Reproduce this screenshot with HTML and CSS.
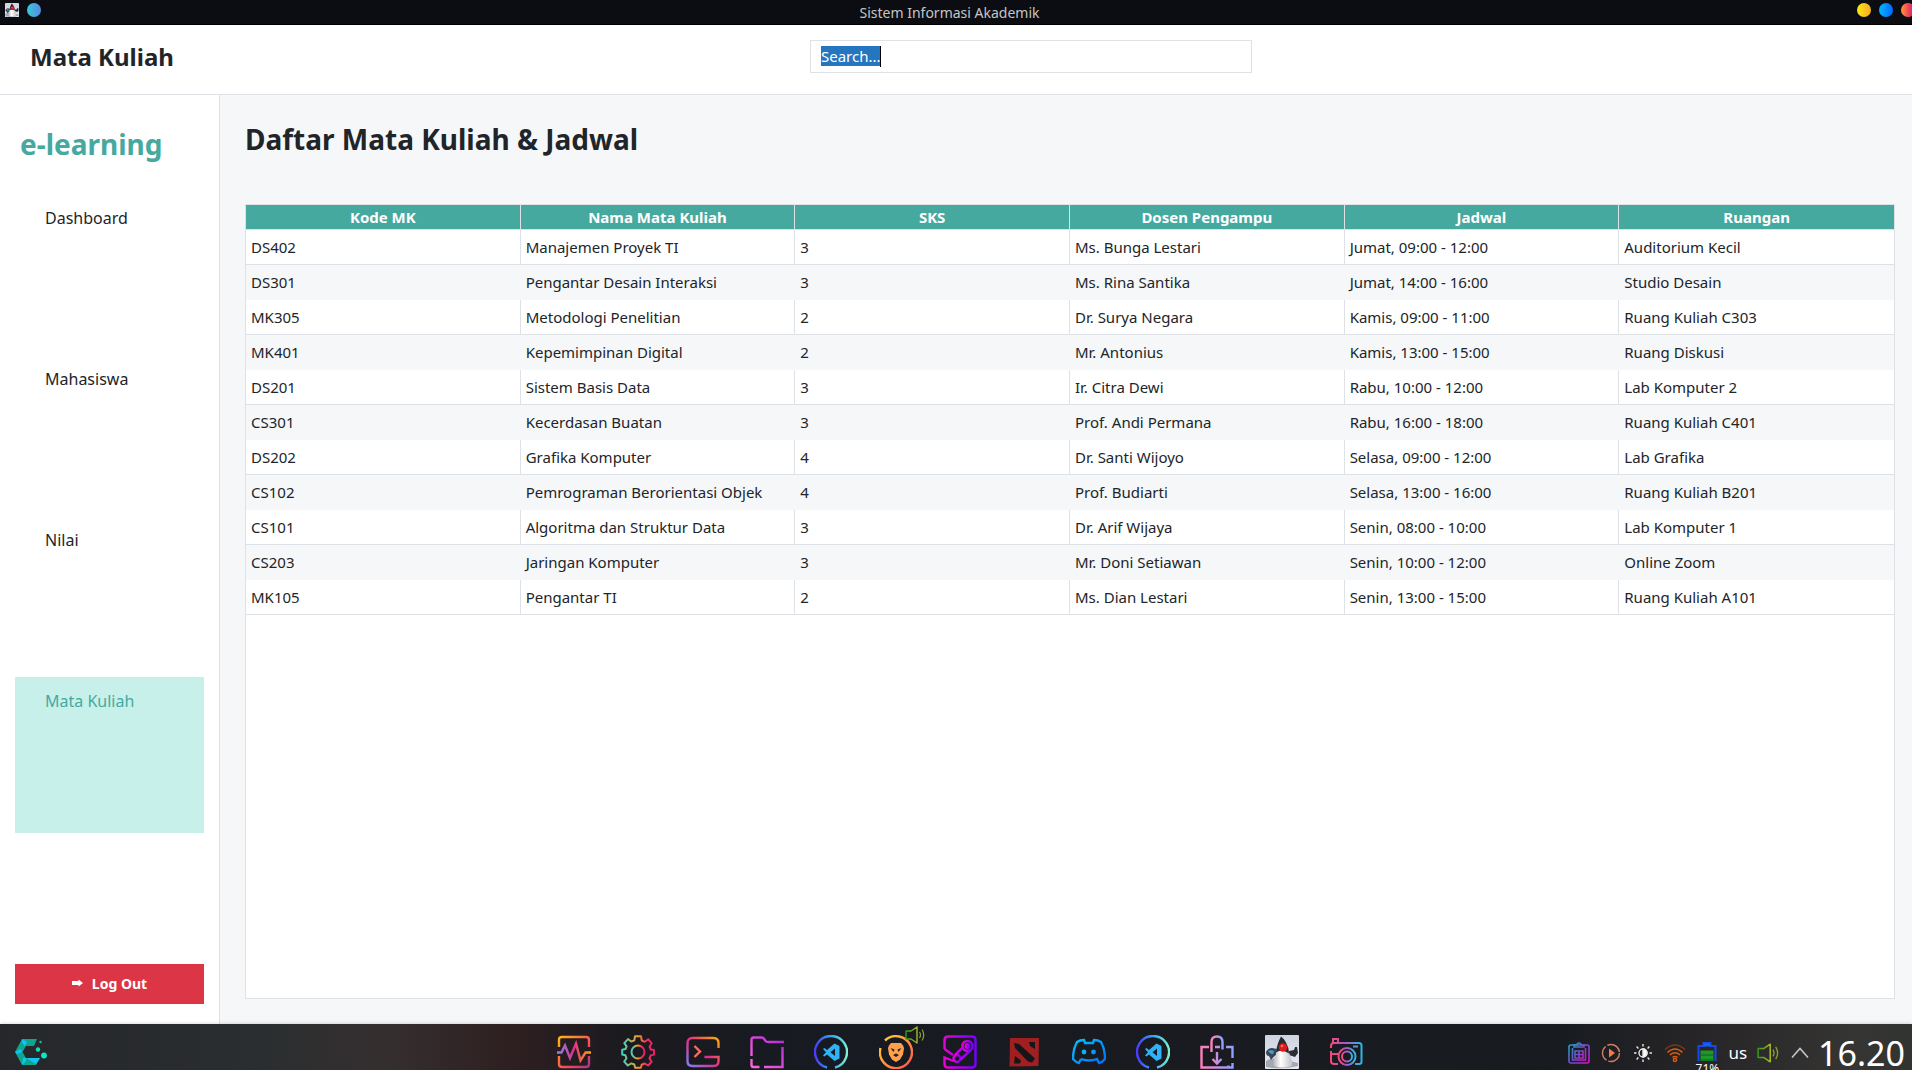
FILE: index.html
```html
<!DOCTYPE html>
<html lang="id">
<head>
<meta charset="utf-8">
<title>Sistem Informasi Akademik</title>
<link rel="stylesheet" href="styles.css">
</head>
<body>
<svg width="0" height="0" class="defs" aria-hidden="true">
  <defs>
    <linearGradient id="warm" x1="0" y1="0" x2="1" y2="1"><stop offset="0" stop-color="#fdb717"/><stop offset=".5" stop-color="#ff5a4d"/><stop offset="1" stop-color="#b0308c"/></linearGradient>
    <linearGradient id="pulse" x1="0" y1="0" x2="1" y2="0"><stop offset="0" stop-color="#7f8cf0"/><stop offset=".5" stop-color="#e0308a"/><stop offset="1" stop-color="#ffa800"/></linearGradient>
    <linearGradient id="gear" x1="0" y1="0" x2="1" y2="0"><stop offset="0" stop-color="#3fd0c8"/><stop offset=".5" stop-color="#f59a20"/><stop offset=".75" stop-color="#f8305c"/><stop offset="1" stop-color="#e0206c"/></linearGradient>
    <linearGradient id="term" x1="0" y1="1" x2="1" y2="0"><stop offset="0" stop-color="#8080ee"/><stop offset=".5" stop-color="#e02c88"/><stop offset="1" stop-color="#ffac00"/></linearGradient>
    <linearGradient id="folder" x1="0" y1="1" x2="1" y2="0"><stop offset="0" stop-color="#ff66d8"/><stop offset="1" stop-color="#ad2ad8"/></linearGradient>
    <linearGradient id="code" x1="0" y1="0" x2="1" y2="0"><stop offset="0" stop-color="#4a3cf8"/><stop offset=".5" stop-color="#2fa6f8"/><stop offset="1" stop-color="#7cf0d0"/></linearGradient>
    <linearGradient id="brave" x1="0" y1="0" x2="1" y2="1"><stop offset="0" stop-color="#ffd830"/><stop offset="1" stop-color="#ff5050"/></linearGradient>
    <linearGradient id="steam" x1="0" y1="0" x2="1" y2="0"><stop offset="0" stop-color="#e800d8"/><stop offset="1" stop-color="#7800ff"/></linearGradient>
    <linearGradient id="discord" x1="0" y1="0" x2="1" y2="1"><stop offset="0" stop-color="#08c0f8"/><stop offset="1" stop-color="#0070ff"/></linearGradient>
    <linearGradient id="bag" x1="0" y1="0" x2="1" y2="0"><stop offset="0" stop-color="#ff80b8"/><stop offset="1" stop-color="#90a0ff"/></linearGradient>
    <linearGradient id="camera" x1="0" y1="0" x2="1" y2="0"><stop offset="0" stop-color="#f04c78"/><stop offset=".4" stop-color="#b850c0"/><stop offset="1" stop-color="#28b8e8"/></linearGradient>
    <linearGradient id="clip" x1="0" y1="0" x2="1" y2="1"><stop offset="0" stop-color="#20a0c8"/><stop offset=".5" stop-color="#7050c8"/><stop offset="1" stop-color="#d810c8"/></linearGradient>
    <linearGradient id="sound" x1="0" y1="0" x2="1" y2="0"><stop offset="0" stop-color="#2f9a1c"/><stop offset="1" stop-color="#a8b820"/></linearGradient>
    <linearGradient id="duke" x1="0" y1="0" x2="0" y2="1"><stop offset="0" stop-color="#ced3e0"/><stop offset="1" stop-color="#e8eaf2"/></linearGradient>
    <linearGradient id="belly" x1="0" y1="0" x2="1" y2="0"><stop offset="0" stop-color="#b4b4b8"/><stop offset=".4" stop-color="#fff"/><stop offset="1" stop-color="#c0c0c6"/></linearGradient>
    <symbol id="i-duke" viewBox="0 0 34 34">
      <rect width="34" height="34" rx="1" fill="url(#duke)"/>
      <path d="M1 26q8-4 16-2t16 4v3q-16 4-32 1z" fill="#a4a7b4"/>
      <path d="M1 17q2-4 6-4l5 1-1 6q-3 2-5 5l-2-4q-3 0-3-4z" fill="#3a4652"/>
      <path d="M3 16q3-1.500 6 0l-1 3q-3 0-5-3z" fill="#3f9fd8"/>
      <path d="M24 16l5-1 1-3h2l1 6-3 4-6-2z" fill="#2c2e36"/>
      <path d="M12 13q0 6-2 9-3 6-1 9 8 3 18 0 1-4-1-8-2-5-3-9z" fill="url(#belly)"/>
      <path d="M16 1.500q3 2 5 6 3 5 3 11-5-3-7-3-3 0-6 2 1-9 5-16z" fill="#2b2c32"/>
      <circle cx="18" cy="12.500" r="4.200" fill="#e01a1c"/><circle cx="17" cy="11" r="1.300" fill="#ff7468"/>
    </symbol>
    <symbol id="i-code" viewBox="0 0 34 34">
      <path d="M13 32.500A16 16 0 1 1 21 32.500" fill="none" stroke="url(#code)" stroke-width="2.400"/>
      <path d="M20.500 8.500l5 2.500v12.500l-5 2.500-7.500-6.500-2.500 2-1.500-1 3-3.300-3-3.300 1.500-1 2.500 2z" fill="#2fb2f6"/>
      <path d="M21 13.500v7.500l-4.500-3.700z" fill="#171a20"/>
    </symbol>
    <symbol id="i-sound" viewBox="0 0 20 18">
      <path d="M1 5h5l6-4v16l-6-4H1z" fill="none" stroke="url(#sound)" stroke-width="1.400" stroke-linejoin="round"/>
      <path d="M14.500 6q2 3 0 6M17 3.500q3.500 5.500 0 11" fill="none" stroke="#88a828" stroke-width="1.200"/>
    </symbol>
  </defs>
</svg>

<div class="titlebar">
  <div class="titlebar-side">
    <svg class="mini-icon" viewBox="0 0 34 34"><use href="#i-duke"/></svg>
    <button class="dot dot-pin" aria-label="Sematkan"></button>
  </div>
  <span class="titlebar-text">Sistem Informasi Akademik</span>
  <div class="titlebar-side titlebar-controls">
    <button class="dot dot-min" aria-label="Minimalkan"></button>
    <button class="dot dot-max" aria-label="Maksimalkan"></button>
    <button class="dot dot-close" aria-label="Tutup"></button>
  </div>
</div>

<header class="header">
  <div class="page-name">Mata Kuliah</div>
  <div class="search-area">
    <div class="search-box">
      <input class="search" id="search" type="text" value="Search..." aria-label="Search">
      <span class="caret"></span>
    </div>
  </div>
</header>

<div class="workspace">
  <aside class="sidebar">
    <div class="brand">e-learning</div>
    <nav class="nav">
      <a class="nav-item" href="#dashboard">Dashboard</a>
      <a class="nav-item" href="#mahasiswa">Mahasiswa</a>
      <a class="nav-item" href="#nilai">Nilai</a>
      <a class="nav-item nav-item-active" href="#mata-kuliah">Mata Kuliah</a>
    </nav>
    <button class="logout"><svg width="11" height="8" viewBox="0 0 11 8" aria-hidden="true"><path d="M0 2h6.500V0.500L11 4 6.500 7.500V6H0z" fill="#fff"/></svg>Log Out</button>
  </aside>

  <main class="main">
    <h1 class="heading">Daftar Mata Kuliah &amp; Jadwal</h1>
    <div class="table-pane">
      <table class="courses">
        <thead>
          <tr><th>Kode MK</th><th>Nama Mata Kuliah</th><th>SKS</th><th>Dosen Pengampu</th><th>Jadwal</th><th>Ruangan</th></tr>
        </thead>
        <tbody>
          <tr><td>DS402</td><td>Manajemen Proyek TI</td><td>3</td><td>Ms. Bunga Lestari</td><td>Jumat, 09:00 - 12:00</td><td>Auditorium Kecil</td></tr>
          <tr><td>DS301</td><td>Pengantar Desain Interaksi</td><td>3</td><td>Ms. Rina Santika</td><td>Jumat, 14:00 - 16:00</td><td>Studio Desain</td></tr>
          <tr><td>MK305</td><td>Metodologi Penelitian</td><td>2</td><td>Dr. Surya Negara</td><td>Kamis, 09:00 - 11:00</td><td>Ruang Kuliah C303</td></tr>
          <tr><td>MK401</td><td>Kepemimpinan Digital</td><td>2</td><td>Mr. Antonius</td><td>Kamis, 13:00 - 15:00</td><td>Ruang Diskusi</td></tr>
          <tr><td>DS201</td><td>Sistem Basis Data</td><td>3</td><td>Ir. Citra Dewi</td><td>Rabu, 10:00 - 12:00</td><td>Lab Komputer 2</td></tr>
          <tr><td>CS301</td><td>Kecerdasan Buatan</td><td>3</td><td>Prof. Andi Permana</td><td>Rabu, 16:00 - 18:00</td><td>Ruang Kuliah C401</td></tr>
          <tr><td>DS202</td><td>Grafika Komputer</td><td>4</td><td>Dr. Santi Wijoyo</td><td>Selasa, 09:00 - 12:00</td><td>Lab Grafika</td></tr>
          <tr><td>CS102</td><td>Pemrograman Berorientasi Objek</td><td>4</td><td>Prof. Budiarti</td><td>Selasa, 13:00 - 16:00</td><td>Ruang Kuliah B201</td></tr>
          <tr><td>CS101</td><td>Algoritma dan Struktur Data</td><td>3</td><td>Dr. Arif Wijaya</td><td>Senin, 08:00 - 10:00</td><td>Lab Komputer 1</td></tr>
          <tr><td>CS203</td><td>Jaringan Komputer</td><td>3</td><td>Mr. Doni Setiawan</td><td>Senin, 10:00 - 12:00</td><td>Online Zoom</td></tr>
          <tr><td>MK105</td><td>Pengantar TI</td><td>2</td><td>Ms. Dian Lestari</td><td>Senin, 13:00 - 15:00</td><td>Ruang Kuliah A101</td></tr>
        </tbody>
      </table>
    </div>
  </main>
</div>

<footer class="taskbar">
  <div class="taskbar-start">
    <button class="launcher" aria-label="Menu">
      <svg width="32" height="28" viewBox="0 0 32 28">
        <path d="M7 1h15l-3 7h-8l-3.500 6L11 20h14l-4 7H7L0 14z" fill="#0fa58c"/>
        <path d="M7 1l5 3-2 4-3-3zM0 14l6-3 1 3-5 2zM11 20h14l-4 6z" fill="#10c4f8"/>
        <path d="M7 27l1-7 3 0 0 3z" fill="#10c4f8"/>
        <circle cx="25.500" cy="4" r="1.200" fill="#0bc7a8"/><circle cx="23" cy="11.500" r="2.200" fill="#08e0c0"/><circle cx="29" cy="17.500" r="2.900" fill="#08e8c4"/>
      </svg>
    </button>
  </div>
  <div class="apps">
    <button class="app" aria-label="Monitor"><svg viewBox="0 0 34 34" fill="none" stroke-width="2.400"><path d="M2 12V5q0-3 3-3h24q3 0 3 3v7M2 21v8q0 3 3 3h24q3 0 3-3v-8" stroke="url(#warm)"/><path d="M0 17.500h4.500L8 10.500l5 12.500 6-14.500 4.500 17 5-8H34" stroke="url(#pulse)"/></svg></button>
    <button class="app" aria-label="Pengaturan"><svg viewBox="0 0 34 34" fill="none" stroke="url(#gear)" stroke-width="2"><path d="M14 1.200h6l.8 4.300 3 1.300 3.600-2.500 3.300 4-2.100 3.400 1.200 2.800 3.200.5v4.600l-3.300.8-1.200 3 2.100 3.400-3.400 3.700-3.500-2-3 1.200-.8 3.100h-5.800l-.8-3.300-3-1.100-3.500 2.100-3.600-3.900 2.300-3.300-1.100-3-3.200-.8v-4.700l3.300-.7 1.100-2.700-2.300-3.300 3.700-4 3.300 2.400 3-1.100z" stroke-linejoin="round"/><circle cx="17" cy="17" r="6.500"/></svg></button>
    <button class="app" aria-label="Terminal"><svg viewBox="0 0 34 34" fill="none" stroke="url(#term)" stroke-width="2.400"><path d="M32.500 13V8q0-5-5-5H6.500q-5 0-5 5v18q0 5 5 5h21q5 0 5-5v-4h-14"/><path d="M8.500 11l5.500 5.500L8.500 22" stroke="#fa6c60"/></svg></button>
    <button class="app" aria-label="Berkas"><svg viewBox="0 0 34 34" fill="none" stroke="url(#folder)" stroke-width="2.400"><path d="M1.500 21V4.500q0-2 2-2h8q2 0 3 2l1 1.500q1 1 3 1H34M1.500 24v6q0 2 2 2h6M14 32h18.500V12"/></svg></button>
    <button class="app" aria-label="Editor kode"><svg><use href="#i-code"/></svg></button>
    <button class="app" aria-label="Peramban">
      <svg viewBox="0 0 34 34"><path d="M6 5.500A16 16 0 1 1 1.500 13" fill="none" stroke="url(#brave)" stroke-width="2.400"/><path d="M12 8h10l2 2.500 1 2.500-1 6.500-3 5-4 2.500-4-2.500-3-5L9 13l1-2.500z" fill="#ffa04c"/><path d="M11.500 13l4 1.500-1 2.500zM22.500 13l-4 1.500 1 2.500zM14 20l3-1.500 3 1.500-3 2z" fill="#251d20"/></svg>
      <svg class="playing" viewBox="0 0 20 18"><use href="#i-sound"/></svg>
    </button>
    <button class="app" aria-label="Steam"><svg viewBox="0 0 34 34" fill="none" stroke="url(#steam)" stroke-width="2.400"><path d="M1.500 14V5q0-3.500 3.500-3.500h24q3.500 0 3.500 3.500v24q0 3.500-3.500 3.500H5Q1.500 32.500 1.500 29v-6.500l9 3.500M1.500 14l8.500 6"/><circle cx="24.500" cy="11" r="5"/><circle cx="24.500" cy="11" r="1.800"/><circle cx="14" cy="23.500" r="3.500"/><path d="M19.500 12.500L12 20M27.500 15.500l-10 9"/></svg></button>
    <button class="app" aria-label="Dota 2"><svg viewBox="0 0 34 34"><path d="M3 3l29 0-.5 28-29 .5z" fill="#a01f20"/><path d="M7 8l5 1 16 14.500-3 4-4-1L8 13zM8 21l6 4.500-1 3H7zM22 7h6v7l-5-3z" fill="#15161a"/></svg></button>
    <button class="app" aria-label="Discord"><svg viewBox="0 0 34 34" fill="none" stroke="url(#discord)" stroke-width="2.400"><path d="M9 24q8 3 16 0l2 4q3-.5 6-4 0-10-4-17-3-2-7-2l-1 3h-8l-1-3Q8 5 5 7 1 14 1 24q3 3.500 6 4l2-4"/><circle cx="12" cy="17" r="2.400" fill="#08b0fc" stroke="none"/><circle cx="21.500" cy="17" r="2.400" fill="#0898fc" stroke="none"/></svg></button>
    <button class="app" aria-label="Editor kode 2"><svg><use href="#i-code"/></svg></button>
    <button class="app" aria-label="Toko aplikasi"><svg viewBox="0 0 34 34" fill="none" stroke="url(#bag)" stroke-width="2.400"><path d="M9 12H1.500v20.500h27v-2M15 12h5M26 12h6.500v11M32.500 28v4.500H28"/><path d="M11.500 17V7q0-5.500 5.500-5.500t5.500 5.500v7.500M17 17v11M12.500 24l4.500 4.500 4.500-4.500"/></svg></button>
    <button class="app" aria-label="Sistem Informasi Akademik"><svg><use href="#i-duke"/></svg></button>
    <button class="app" aria-label="Tangkapan layar"><svg viewBox="0 0 34 34" fill="none" stroke="url(#camera)" stroke-width="2"><path d="M9 29H5q-3 0-3-3V16M2 13v-2q0-3 3-3h25q2.500 0 2.500 2.500V27q0 2-2.500 2h-4M4 8V4h5v4M2 19h7M24 11.500h5"/><circle cx="18" cy="21.500" r="8.500"/><circle cx="18" cy="21.500" r="5"/></svg></button>
  </div>
  <div class="tray">
    <svg class="tray-icon" viewBox="0 0 22 22" fill="none" stroke="url(#clip)" stroke-width="1.600"><path d="M3 3h16q2 0 2 2v14q0 2-2 2H3q-2 0-2-2V5q0-2 2-2z"/><path d="M4.500 6v12h13V6M6 5h10V3h-3q0-2-2-2T9 3H6zM7 9h8v7H7zM11 9v7M7 12.500h8"/></svg>
    <svg class="tray-icon" viewBox="0 0 22 22"><circle cx="11" cy="11" r="8.500" fill="none" stroke="#d08068" stroke-width="1.400" stroke-dasharray="16 2"/><path d="M9 6.500l6 4.500-6 4.500z" fill="#f87848"/></svg>
    <svg class="tray-icon" viewBox="0 0 22 22" stroke="#e8e8e8" stroke-width="1.400"><circle cx="11" cy="11" r="4" fill="none"/><path d="M11 7a4 4 0 0 1 0 8z" fill="#fff"/><path d="M11 2v2.500M11 17.500V20M2 11h2.500M17.500 11H20M4.600 4.600l1.800 1.800M15.600 15.600l1.800 1.800M4.600 17.400l1.800-1.800M15.600 6.400l1.800-1.800"/></svg>
    <svg class="tray-icon" viewBox="0 0 22 22" fill="none" stroke="#d85c10" stroke-width="1.500"><path d="M1 7.500q10-9 20 0" stroke="#7c3818"/><path d="M3.500 10.500q7.500-7 15 0M6 13q5-4.500 10 0M8.500 15.500q2.500-2 5 0"/><circle cx="11" cy="18" r="1.600"/></svg>
    <div class="battery">
      <svg viewBox="0 0 22 22"><path d="M2.500 22V4h5V1h7v3h5v18" fill="none" stroke="#1648f0" stroke-width="2"/><path d="M7.500 1.500h7v3h-7z" fill="#1460f0"/><path d="M4.500 8.500h13V22h-13z" fill="#1c9a28"/><path d="M4.500 13h13M4.500 18h13" stroke="#105c20"/></svg>
      <span class="battery-level">71%</span>
    </div>
    <span class="layout">us</span>
    <svg class="tray-icon" viewBox="0 0 20 18"><use href="#i-sound"/></svg>
    <svg class="tray-icon" viewBox="0 0 22 22" fill="none" stroke="#c8c8c8" stroke-width="1.500"><path d="M3 15.500l8-9 8 9"/></svg>
    <time class="clock" datetime="16:20">16.20</time>
  </div>
</footer>
<script src="app.js"></script>
</body>
</html>
```
FILE: styles.css
```css
* {
  box-sizing: border-box;
}

body {
  margin: 0;
  height: 100vh;
  display: flex;
  flex-direction: column;
  overflow: hidden;
  background: #fff;
  color: #212529;
  font-family: "Noto Sans", sans-serif;
  font-size: 15px;
}

button {
  padding: 0;
  border: 0;
  background: none;
  font: inherit;
}

svg {
  display: block;
}

.defs {
  position: absolute;
}

/* Window title bar */
.titlebar {
  flex: none;
  display: flex;
  justify-content: space-between;
  height: 25px;
  background: #0c0d12;
  border-bottom: 1px solid #000;
  color: #c4c5c7;
  font-size: 14px;
  line-height: 26px;
}

.titlebar-text {
  margin-right: 16px;
}

.titlebar-side {
  flex: 1;
  display: flex;
  gap: 8px;
  padding: 3px 0 0 5px;
}

.titlebar-controls {
  justify-content: flex-end;
  margin-right: -3px;
}

.mini-icon,
.dot {
  flex: none;
  width: 14px;
  height: 14px;
}

.dot {
  border-radius: 50%;
}

.dot-pin { background: linear-gradient(90deg, #35cbd8, #5b86e5); }
.dot-min { background: linear-gradient(90deg, #f9ea10, #f7a928); }
.dot-max { background: linear-gradient(90deg, #00b8ff, #0068ff); }
.dot-close { background: linear-gradient(90deg, #ff9a3c, #f03858 60%, #a02c90); }

/* Page header */
.header {
  flex: none;
  display: flex;
  gap: 6px;
  height: 70px;
  padding: 15px 30px;
  border-bottom: 1px solid #dee2e6;
}

.page-name {
  font-size: 24px;
  font-weight: 700;
  line-height: 34px;
}

.search-area {
  flex: 1;
  display: flex;
  justify-content: center;
}

.search-box {
  position: relative;
  width: 442px;
  height: 33px;
}

.search {
  width: 100%;
  height: 100%;
  padding: 4px 10px 6px;
  border: 1px solid #dee2e6;
  outline: 0;
  color: #212529;
  font: inherit;
}

.search::selection {
  background: #2675bf;
  color: #fff;
}

.caret {
  position: absolute;
  left: 70px;
  top: 6px;
  width: 1px;
  height: 21px;
  background: #000;
}

/* Sidebar and content */
.workspace {
  flex: 1;
  display: flex;
  min-height: 0;
}

.sidebar {
  flex: none;
  display: flex;
  flex-direction: column;
  width: 220px;
  padding: 29px 15px 20px;
  border-right: 1px solid #dee2e6;
}

.brand {
  padding: 0 5px 30px;
  color: #46a99f;
  font-size: 28px;
  font-weight: 700;
  line-height: 40px;
}

.nav {
  flex: 1;
  display: flex;
  flex-direction: column;
  gap: 5px;
  margin-bottom: 131px;
}

.nav-item {
  flex: 1;
  padding: 13px 30px;
  color: #212529;
  font-size: 16px;
  line-height: 22px;
  text-decoration: none;
}

.nav-item-active {
  background: #c7f0eb;
  color: #46a99f;
}

.logout {
  display: flex;
  justify-content: center;
  align-items: center;
  gap: 9px;
  height: 40px;
  padding-bottom: 2px;
  background: #dc3545;
  color: #fff;
  font-size: 14px;
  font-weight: 700;
}

.main {
  flex: 1;
  display: flex;
  flex-direction: column;
  padding: 24px 17px 25px 25px;
  background: #f5f7f9;
}

.heading {
  margin: 0 0 45px;
  font-size: 28px;
  line-height: 40px;
}

.table-pane {
  flex: 1;
  border: 1px solid #dee2e6;
  background: #fff;
}

.courses {
  width: 100%;
  table-layout: fixed;
  border-collapse: separate;
  border-spacing: 0;
}

.courses th {
  height: 25px;
  padding: 0;
  border-right: 1px solid #dee2e6;
  border-bottom: 1px solid #dee2e6;
  background: #46a99f;
  color: #fff;
  line-height: 24px;
}

.courses td {
  height: 35px;
  padding: 0 5px;
  border-right: 1px solid #dee2e6;
  border-bottom: 1px solid #dee2e6;
  line-height: 34px;
}

.courses tr > :last-child {
  border-right-width: 0;
}

.courses tbody tr:nth-child(even) td {
  background: #f5f7f9;
  border-color: #f5f7f9;
}

/* Desktop taskbar */
.taskbar {
  position: relative;
  flex: none;
  display: flex;
  align-items: center;
  height: 46px;
  padding: 10px 7px 0 15px;
  background: linear-gradient(90deg, #25272b 0, #2b2e30 14%, #352f2f 20%, #2e1f21 27%, #1c1b1f 32%, #171a20 40%, #191b20 68%, #171b20 81%, #272527 89%, #353533 97%, #323432);
  box-shadow: 0 0 4px rgba(0, 0, 0, .2);
  color: #fff;
}

.taskbar-start,
.tray {
  flex: 1;
  display: flex;
  align-items: center;
}

.apps {
  display: flex;
  justify-content: space-between;
  width: 806px;
}

.app {
  position: relative;
  width: 34px;
  height: 34px;
}

.app > svg {
  width: 34px;
  height: 34px;
}

.app > .playing {
  position: absolute;
  left: 26px;
  top: -9px;
  width: 20px;
  height: 18px;
}

.tray {
  justify-content: flex-end;
  gap: 10px;
  padding-top: 2px;
}

.tray-icon,
.battery {
  flex: none;
  width: 22px;
  height: 22px;
}

.battery {
  position: relative;
}

.battery-level {
  position: absolute;
  left: -3px;
  top: 19px;
  width: 28px;
  border-radius: 3px;
  background: #24262c;
  font-size: 12px;
  line-height: 16px;
  text-align: center;
}

.layout {
  font-size: 17px;
  line-height: 20px;
}

.clock {
  margin-left: -3px;
  font-size: 34px;
  line-height: 34px;
}
```
FILE: app.js
```js
// The search field starts focused with its text selected.
const search = document.getElementById("search");
search.focus();
search.select();
```
